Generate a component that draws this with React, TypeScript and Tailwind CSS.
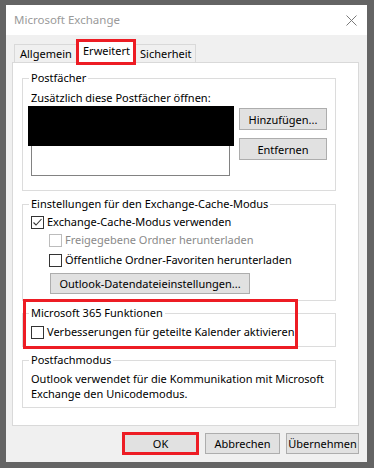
import React from "react";

const font = { fontFamily: '"Noto Sans", "Segoe UI", sans-serif' };

function Box({ checked, disabled }: { checked?: boolean; disabled?: boolean }) {
  return (
    <span
      className={
        "flex h-[13px] w-[13px] shrink-0 items-center justify-center border bg-white " +
        (disabled ? "border-[#bcbcbc]" : "border-[#333333]")
      }
    >
      {checked && (
        <svg width="11" height="11" viewBox="0 0 11 11">
          <path d="M1.5 5.5 L4 8 L9.5 2" fill="none" stroke="#333" strokeWidth="1.1" />
        </svg>
      )}
    </span>
  );
}

function Check({
  label,
  checked,
  disabled,
  className = "",
}: {
  label: string;
  checked?: boolean;
  disabled?: boolean;
  className?: string;
}) {
  return (
    <div className={"flex h-[18px] items-center gap-[3px] " + className}>
      <Box checked={checked} disabled={disabled} />
      <span className={disabled ? "text-[#8a8a8a]" : "text-black"}>{label}</span>
    </div>
  );
}

function Group({
  title,
  className = "",
  children,
}: {
  title: string;
  className?: string;
  children: React.ReactNode;
}) {
  return (
    <fieldset className={"w-[314px] border border-[#dcdcdc] pl-[8px] " + className}>
      <legend className="-ml-[2px] px-[2px] leading-[16px]">{title}</legend>
      {children}
    </fieldset>
  );
}

function Btn({ label, className = "" }: { label: string; className?: string }) {
  return (
    <div
      className={
        "flex items-center justify-center border border-[#adadad] bg-[#e1e1e1] leading-none " + className
      }
    >
      {label}
    </div>
  );
}

export default function App() {
  return (
    <div
      className="h-[468px] w-[374px] bg-[#646464] pb-[6px] pl-[6px] pr-[7px] pt-[5px] text-[11px] leading-[16px] text-black"
      style={font}
    >
      <div className="flex h-full flex-col bg-[#f0f0f0]">
        {/* Title bar */}
        <div className="flex h-[30px] shrink-0 items-center justify-between bg-white pl-[8px] pr-[10px]">
          <span className="text-[11.5px] text-[#9a9a9a]">Microsoft Exchange</span>
          <svg width="11" height="11" viewBox="0 0 11 11">
            <path d="M0.5 0.5 L10.5 10.5 M10.5 0.5 L0.5 10.5" stroke="#7a7a7a" strokeWidth="1" />
          </svg>
        </div>

        <div className="flex flex-1 flex-col pl-[6px] pr-[8px]">
          {/* Tabs */}
          <div className="mt-[9px] flex h-[18px] items-start pl-[2px]">
            <div className="flex h-[18px] w-[62px] items-center border-l border-t border-[#d9d9d9] pl-[5px]">
              Allgemein
            </div>
            <div className="relative z-10 -mt-[5px] flex h-[26px] w-[60px] items-center border-[3px] border-[#ed1c24] bg-white pl-[4px] pb-[2px]">
              Erweitert
            </div>
            <div className="flex h-[18px] w-[60px] items-center border-r border-t border-[#d9d9d9] pl-[4px]">
              Sicherheit
            </div>
          </div>

          {/* Panel */}
          <div className="h-[364px] border border-[#d9d9d9] bg-white pl-[9px] pt-[7px]">
            <Group title="Postfächer" className="pb-[14px]">
              <div className="mt-[4px]">Zusätzlich diese Postfächer öffnen:</div>
              <div className="flex gap-[9px]">
                <div className="relative h-[70px] w-[199px] border border-[#828282] bg-white">
                  <div className="absolute -left-[4px] -top-[1px] h-[40px] w-[206px] bg-black" />
                </div>
                <div className="mt-[2px] flex flex-col gap-[8px]">
                  <Btn label="Hinzufügen..." className="h-[22px] w-[88px]" />
                  <Btn label="Entfernen" className="h-[22px] w-[88px]" />
                </div>
              </div>
            </Group>

            <Group title="Einstellungen für den Exchange-Cache-Modus" className="mt-[5px] pb-[6px]">
              <Check label="Exchange-Cache-Modus verwenden" checked className="mt-[1px]" />
              <Check label="Freigegebene Ordner herunterladen" disabled className="ml-[18px]" />
              <Check label="Öffentliche Ordner-Favoriten herunterladen" className="ml-[18px] mt-[2px]" />
              <Btn label="Outlook-Datendateieinstellungen..." className="ml-[19px] mt-[4px] h-[21px] w-[200px]" />
            </Group>

            <div className="relative mt-[4px]">
              <Group title="Microsoft 365 Funktionen" className="pb-[5px]">
                <Check label="Verbesserungen für geteilte Kalender aktivieren" className="mt-[2px]" />
              </Group>
              {/* highlight annotation */}
              <div className="absolute left-[1px] -top-[6px] h-[50px] w-[275px] border-[3px] border-[#ed1c24]" />
            </div>

            <Group title="Postfachmodus" className="mt-[5px] pb-[6px]">
              <p className="mt-[3px] leading-[15px]">
                Outlook verwendet für die Kommunikation mit Microsoft
                <br />
                Exchange den Unicodemodus.
              </p>
            </Group>
          </div>

          {/* Dialog buttons */}
          <div className="mt-[6px] flex items-center justify-end gap-[6px]">
            <Btn label="OK" className="h-[23px] w-[77px] border-[3px] border-[#ed1c24]" />
            <Btn label="Abbrechen" className="h-[21px] w-[75px]" />
            <Btn label="Übernehmen" className="h-[21px] w-[73px]" />
          </div>
        </div>
      </div>
    </div>
  );
}
